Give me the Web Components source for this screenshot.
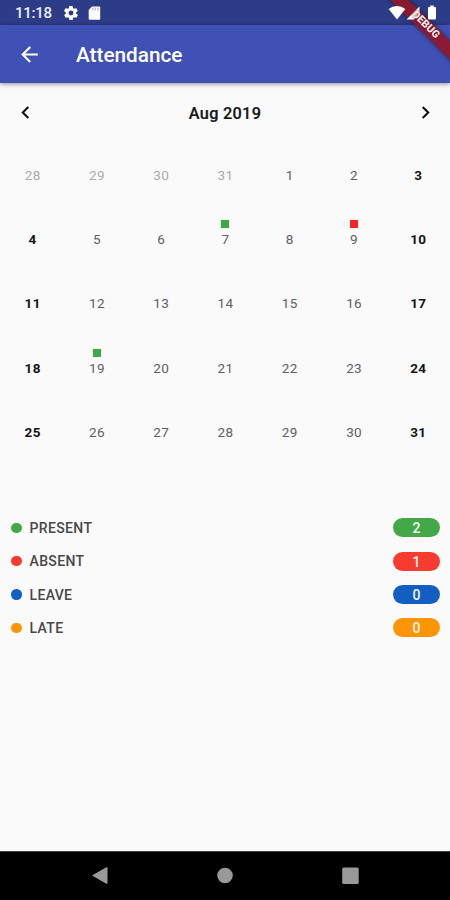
<!DOCTYPE html>
<html lang="en">
<head>
<meta charset="utf-8">
<title>Attendance</title>
<style>
html,body{margin:0;height:100%;background:#fafafa;overflow:hidden}
body{font-family:Roboto,"Liberation Sans",sans-serif}
</style>
</head>
<body>
<attendance-app></attendance-app>
<script>
const define = (name, css, html) => customElements.define(name, class extends HTMLElement {
  connectedCallback() {
    if (this.shadowRoot) return;
    const root = this.attachShadow({ mode: 'open' });
    root.innerHTML = `<style>*{box-sizing:border-box}svg{display:block}${css}</style>` + (typeof html === 'function' ? html(this) : html);
  }
});

// System icons are painted above the debug ribbon, so the bar's colour comes from the app background.
define('status-bar', `
  :host{display:flex;align-items:center;height:25px;flex:none;position:relative;z-index:3;color:#eceefa;padding:0 13px 0 15px;font-size:15px;font-weight:500;line-height:25px}
  .time{width:49px;white-space:nowrap;padding-top:2px;letter-spacing:-.25px}
  .sd{margin-left:9px}
  .right{margin-left:auto;display:flex;align-items:center}`,
  `<span class="time">11:18</span>
  <svg width="14" height="14" viewBox="2 2 20 20" style="margin-top:1px"><path fill="#fff" fill-rule="evenodd" d="M19.400 13a7.800 7.800 0 0 0 0-2l2.100-1.600c.2-.2.2-.4.1-.6l-2-3.500c-.1-.2-.4-.3-.6-.2l-2.500 1a7.500 7.500 0 0 0-1.700-1l-.4-2.600a.5.5 0 0 0-.5-.5h-4a.5.5 0 0 0-.5.5l-.4 2.600a7.500 7.500 0 0 0-1.700 1l-2.500-1c-.2-.1-.5 0-.6.2l-2 3.500c-.1.2-.1.4.1.6L4.600 11a7.800 7.800 0 0 0 0 2l-2.100 1.600c-.2.2-.2.4-.1.6l2 3.500c.1.2.4.3.6.2l2.500-1a7.500 7.500 0 0 0 1.700 1l.4 2.600c0 .3.200.5.500.5h4c.3 0 .5-.2.500-.5l.4-2.600a7.500 7.500 0 0 0 1.700-1l2.500 1c.2.1.5 0 .6-.2l2-3.500c.1-.2.1-.4-.1-.6zM12 15.500a3.500 3.500 0 1 1 0-7 3.500 3.500 0 0 1 0 7z"/></svg>
  <svg class="sd" width="14" height="14" viewBox="0 0 14 14" style="margin-top:1px"><path fill="#fff" d="M5 .5h7.200q1 0 1 1v11.300q0 1-1 1H2.700q-1 0-1-1V4z"/><path stroke="#b4bad8" stroke-width="1.300" d="M5.800 1.500v3M8.300 1.500v3M10.800 1.500v3"/></svg>
  <div class="right">
    <svg width="18" height="14" viewBox="0 0 18 14"><path fill="#fff" d="M9 13.500.7 3a13.200 13.200 0 0 1 16.600 0z"/></svg>
    <svg width="14" height="14" viewBox="0 0 14 14" style="margin:1px 0 0"><path fill="#fff" d="M.5 13.500 13.500.5v5L8 13.500z"/></svg>
    <svg width="10" height="15" viewBox="0 0 10 15" style="margin-left:7.500px"><path fill="#fff" d="M3.200.5h3.600V2H8q1 0 1 1v10.500q0 1-1 1H2q-1 0-1-1V3q0-1 1-1h1.200z"/></svg>
  </div>`);

define('app-bar', `
  :host{display:flex;align-items:center;height:58px;flex:none;background:#3f51b5;color:#fff;padding:2px 0 0 17px;box-shadow:0 1px 4px rgba(0,0,0,.3),0 2px 5px rgba(0,0,0,.12);z-index:1}
  svg{margin-top:-1px}
  .title{margin-left:33px;font-size:20.750px;font-weight:500;line-height:30px}`,
  `<svg width="25" height="25" viewBox="0 0 24 24" style="margin-right:1px"><path fill="#fff" d="M20 11H7.830l5.590-5.590L12 4l-8 8 8 8 1.410-1.410L7.830 13H20z"/></svg>
  <span class="title"><slot></slot></span>`);

define('debug-banner', `
  :host{position:absolute;top:0;right:0;width:70px;height:70px;overflow:hidden;z-index:2}
  div{position:absolute;left:-5px;top:18.500px;width:100px;height:13px;transform:rotate(45deg);background:rgba(143,24,42,.93);box-shadow:0 0 5px rgba(0,0,0,.5)}`,
  `<div></div>`);

define('debug-label', `
  :host{position:absolute;top:0;right:0;width:70px;height:70px;overflow:hidden;z-index:4}
  span{position:absolute;left:-4.500px;top:18px;width:100px;height:13px;transform:rotate(45deg);color:#f5e9ec;font-size:10.600px;font-weight:900;line-height:13px;text-align:center;text-shadow:0 0 1.500px #501}`,
  `<span>DEBUG</span>`);

define('month-header', `
  :host{display:flex;align-items:center;justify-content:space-between;padding:0 12px;height:59.500px}
  svg{margin-left:.5px}
  span{font-size:16.300px;font-weight:500;color:#161616;line-height:22px;letter-spacing:.3px;-webkit-text-stroke:.2px #161616;padding-top:2px}`,
  `<svg width="25" height="25" viewBox="0 0 24 24"><path fill="#111" d="M15.410 7.410 14 6l-6 6 6 6 1.410-1.410L10.830 12z"/></svg>
  <span><slot></slot></span>
  <svg width="25" height="25" viewBox="0 0 24 24"><path fill="#111" d="M10 6 8.590 7.410 13.170 12l-4.580 4.590L10 18l6-6z"/></svg>`);

define('calendar-day', `
  :host{display:flex;position:relative;align-items:center;justify-content:center;font-size:13.500px;letter-spacing:.35px;color:#606060;padding:.5px 0 0 1px}
  :host([kind=outside]){color:#aaa}
  :host([kind=weekend]){color:#151515;font-weight:700}
  i{position:absolute;top:13.500px;left:calc(50% - 3.600px);width:8px;height:8px}`,
  el => `<span><slot></slot></span>${el.hasAttribute('mark') ? `<i style="background:${el.getAttribute('mark')}"></i>` : ''}`);

define('month-grid', `
  :host{display:grid;grid-template-columns:repeat(7,1fr);grid-auto-rows:64.286px}`,
  () => {
    const marks = { 7: '#3bad40', 9: '#f5261b', 19: '#3bad40' };
    return Array.from({ length: 35 }, (_, i) => {
      const d = i < 4 ? 28 + i : i - 3;
      const kind = i < 4 ? 'outside' : (i % 7 === 0 || i % 7 === 6) ? 'weekend' : 'weekday';
      return `<calendar-day kind="${kind}"${i >= 4 && marks[d] ? ` mark="${marks[d]}"` : ''}>${d}</calendar-day>`;
    }).join('');
  });

define('legend-row', `
  :host{display:flex;align-items:center;height:33.400px;padding:0 10px 0 11px;font-size:14px;letter-spacing:.35px;font-weight:500;color:#484848}
  i{width:10.500px;height:10.500px;border-radius:50%;background:var(--tone);margin-right:8px}
  b{margin-left:auto;width:47px;height:19px;border-radius:9.500px;background:var(--tone);color:#f6f6f6;font-size:14px;letter-spacing:0;font-weight:500;line-height:20px;text-align:center}`,
  el => `<i></i><slot></slot><b>${el.getAttribute('count')}</b>`);

define('nav-bar', `
  :host{display:flex;align-items:center;justify-content:space-around;height:49.500px;flex:none;background:#000;padding:0 37px;border-top:1px solid #444}`,
  `<svg width="18" height="20" viewBox="0 0 18 20"><path fill="#999" d="M1 9.500 15.300 1.300q1.200-.5 1.200.7v15q0 1.200-1.200.7z"/></svg>
  <svg width="18" height="18" viewBox="0 0 18 18"><circle cx="9" cy="8.500" r="7.800" fill="#999"/></svg>
  <svg width="18" height="18" viewBox="0 0 18 18"><rect x="1.200" y=".5" width="16.500" height="16.500" rx="1.500" fill="#999"/></svg>`);

define('attendance-app', `
  :host{display:flex;flex-direction:column;position:relative;width:450px;height:900px;background:linear-gradient(#2d3c86 25px,#fafafa 25px);overflow:hidden}
  main{flex:1;min-height:0}
  .legend{margin-top:47.200px}`,
  `<status-bar></status-bar>
  <app-bar>Attendance</app-bar>
  <main>
    <month-header>Aug 2019</month-header>
    <month-grid></month-grid>
    <div class="legend">
      <legend-row style="--tone:#43a948" count="2">PRESENT</legend-row>
      <legend-row style="--tone:#f63b30" count="1">ABSENT</legend-row>
      <legend-row style="--tone:#125fc1" count="0">LEAVE</legend-row>
      <legend-row style="--tone:#ff9505" count="0">LATE</legend-row>
    </div>
  </main>
  <nav-bar></nav-bar>
  <debug-banner></debug-banner>
  <debug-label></debug-label>`);
</script>
</body>
</html>
